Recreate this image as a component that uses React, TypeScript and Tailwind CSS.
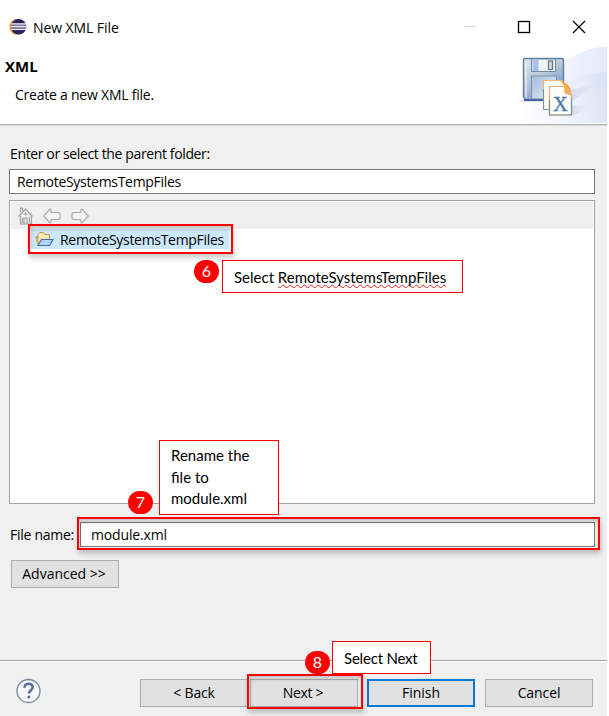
import type { ReactNode } from "react";

function EclipseIcon() {
  return (
    <svg width="18" height="18" viewBox="0 0 18 18">
      <circle cx="8.3" cy="8.8" r="7.9" fill="#f39a32" />
      <circle cx="9.6" cy="8.8" r="7.7" fill="#2c2560" />
      <path d="M2.3 6h14.6M1.8 8.7h15.6M2.3 11.4h14.6" stroke="#f4f3fa" strokeWidth="1.4" />
      <path d="M2 7.3h15M2 10.1h15" stroke="#8e88ad" strokeWidth="1" />
    </svg>
  );
}

function WizardBanner() {
  return (
    <svg width="97" height="76" viewBox="0 2 97 76">
      <defs>
        <linearGradient id="sweep" x1="0" y1="0" x2="1" y2="0">
          <stop offset="0" stopColor="#ffffff" />
          <stop offset="1" stopColor="#e4eaf9" />
        </linearGradient>
        <linearGradient id="sweepLow" x1="0" y1="0.6" x2="1" y2="0.4">
          <stop offset="0" stopColor="#ffffff" stopOpacity="0" />
          <stop offset="1" stopColor="#dbe2f6" />
        </linearGradient>
        <linearGradient id="disk" x1="0" y1="0" x2="0.6" y2="1">
          <stop offset="0" stopColor="#dfe8ee" />
          <stop offset="0.5" stopColor="#b5c7da" />
          <stop offset="1" stopColor="#7292c4" />
        </linearGradient>
        <linearGradient id="label" x1="0" y1="0" x2="1" y2="1">
          <stop offset="0" stopColor="#a4bddf" />
          <stop offset="1" stopColor="#e3ecf8" />
        </linearGradient>
        <linearGradient id="shade" x1="0" y1="0" x2="1" y2="0">
          <stop offset="0" stopColor="#a7a3c4" stopOpacity="0.4" />
          <stop offset="1" stopColor="#cfcfe8" stopOpacity="0" />
        </linearGradient>
      </defs>
      <path d="M8 78C28 34 58 4 97 1V78Z" fill="url(#sweep)" />
      <path d="M15 78C34 47 62 28 97 27V78Z" fill="url(#sweepLow)" />
      <path d="M55 47L89 37Q80 46 61 56Z" fill="url(#shade)" />
      <path d="M61 61L80 60Q75 67 59 71Z" fill="url(#shade)" />
      <path d="M8 57l6-3h20v3Z" fill="#c9bfd6" opacity="0.5" />
      <path d="M14.500 13.500h37.500q1.500 0 1.500 1.500v40h-37l-3-3V14.500q0-1 1-1Z" fill="url(#disk)" stroke="#607e9f" strokeWidth="1.400" />
      <path d="M16 53V16" stroke="#e9f2f4" strokeWidth="1.300" />
      <rect x="21.500" y="14" width="24" height="12.500" fill="#f0f4f8" stroke="#6d88a4" />
      <rect x="22.500" y="14.500" width="6" height="11.500" fill="#a9c0e2" />
      <rect x="38.500" y="16" width="4" height="8.500" fill="#d3dce2" stroke="#667d88" strokeWidth="1.300" />
      <rect x="21.500" y="31" width="25" height="23" fill="url(#label)" stroke="#7892ae" />
      <path d="M14 55h22" stroke="#4465a4" strokeWidth="2" />
      <path d="M33.500 35.500h18l7 7v22h-25Z" fill="#f8faf5" stroke="#efb86d" strokeWidth="1.200" />
      <path d="M33.500 44v20.500h5" fill="none" stroke="#739a93" />
      <path d="M50 36q11 2 11 12Z" fill="#f2a54b" />
      <path d="M39.500 41.500h15l7 8v20.500h-22Z" fill="#fcfcfa" stroke="#e9b473" strokeWidth="1.200" />
      <path d="M39.500 55v15h22V53" fill="none" stroke="#779890" strokeWidth="1.200" />
      <path d="M54 41.500l.5 7 7 2-4-6Z" fill="#f4aa55" />
      <text x="43" y="65.500" fontFamily="Liberation Serif, serif" fontSize="20.500" stroke="#4d7aab" strokeWidth="0.4" fill="#4d7aab">X</text>
    </svg>
  );
}

function HomeIcon() {
  return (
    <svg width="17" height="19" viewBox="0 0 17 19" fill="none" stroke="#a2a2a2" strokeWidth="1.200">
      <path d="M3.500 6V2h2v2.500M1.500 10.500L8.500 3l7 7.500M3.500 10v8h11v-8M7 18v-6h3v6" />
      <path d="M8.500 6.500v3M6.500 8h4M5.500 12v5M12.500 11v6" />
    </svg>
  );
}

function ArrowIcon({ back = false }: { back?: boolean }) {
  return (
    <svg width="18" height="16" viewBox="0 0 18 16" fill="#f4f4f4" stroke="#aaaaaa" strokeWidth="1.200" strokeLinejoin="round" className={back ? "" : "-scale-x-100"}>
      <path d="M.8 8L7 1.200Q8 1 8 2v2.500h7.500l1.500 1v5l-1.500 1H8V14q0 1-1 .8Z" />
    </svg>
  );
}

function FolderIcon() {
  return (
    <svg width="19" height="16" viewBox="0 0 19 16">
      <path d="M3 13V3l1.500-1.500h4L10 3.500h4.500V9" fill="#fae5a6" stroke="#c9974c" />
      <path d="M4 5h10" stroke="#fff6cf" />
      <path d="M.8 6h2M3 14.500L6.500 8.500H18L14.500 14.500Z" fill="#b3d3f3" stroke="#466cb1" strokeWidth="1.200" />
      <path d="M3 13.500L.8 6" stroke="#c9974c" />
    </svg>
  );
}

const ui = "font-['Open_Sans','Noto_Sans',sans-serif] text-black whitespace-nowrap";

function Badge({ n, className }: { n: number; className: string }) {
  return (
    <div className={`absolute flex h-[23px] w-[25px] items-center justify-center rounded-full bg-[#fe0000] pb-px font-['Lato',sans-serif] text-[16px] leading-none text-white ${className}`}>
      {n}
    </div>
  );
}

function Callout({ children, className }: { children: ReactNode; className: string }) {
  return (
    <div className={`absolute border border-[#fa0000] bg-white font-['Lato',sans-serif] text-[15px] whitespace-nowrap text-black ${className}`}>
      {children}
    </div>
  );
}

function Highlight({ className }: { className: string }) {
  return <div className={`absolute border-2 border-[#ff0000] shadow-[1px_4px_5px_rgba(0,0,0,0.2),inset_1px_3px_4px_rgba(0,0,0,0.18)] ${className}`} />;
}

function DialogButton({ children, className }: { children: ReactNode; className: string }) {
  return (
    <button className={`flex h-7 items-center justify-center ${ui} bg-[#e1e1e1] text-[14px] leading-[20px] ${className}`}>
      {children}
    </button>
  );
}

export default function App() {
  return (
    <div className="h-[716px] w-[609px] bg-white">
      <div className={`relative flex h-full w-[607px] flex-col overflow-hidden bg-[#f0f0f0] text-[14px] ${ui}`}>
        <header className="flex h-[126px] shrink-0 flex-col border-b border-b-[#dcdcdc] bg-white">
          <div className="flex h-[47px] shrink-0 items-center pt-[7px] pl-[9px]">
            <EclipseIcon />
            <span className="ml-[6px] tracking-[-0.080px]">New XML File</span>
            <div className="ml-auto flex items-center pr-[20px]">
              <svg width="123" height="14" viewBox="0 0 123 14" fill="none">
                <path d="M0 6.500h12" stroke="#d4d4d4" />
                <rect x="54.500" y="1.500" width="11" height="11" stroke="#000" strokeWidth="1.300" />
                <path d="M109 1l12 12M121 1l-12 12" stroke="#000" strokeWidth="1.300" />
              </svg>
            </div>
          </div>
          <div className="flex h-[78px] border-b border-b-[#b0b0b0]">
            <div className="pt-[9px] pl-[5px]">
              <h1 className="text-[15px] leading-[20px] font-bold">XML</h1>
              <p className="mt-[9px] ml-[10px] leading-[20px] tracking-[-0.230px]">Create a new XML file.</p>
            </div>
            <div className="ml-auto"><WizardBanner /></div>
          </div>
        </header>

        <main className="flex h-[534px] flex-col pt-[18px] pr-[12px] pl-[9px]">
          <label className="ml-px h-[25px] leading-[20px] tracking-[-0.370px]">Enter or select the parent folder:</label>
          <div className="h-[25px] border border-[#777777] bg-white pl-[7px] leading-[23px] tracking-[-0.300px]">RemoteSystemsTempFiles</div>
          <div className="mt-[6px] h-[304px] border border-[#a0a0a8] bg-white p-px">
            <div className="flex h-[27px] items-center gap-[9px] bg-[#efefef] pl-[6px]">
              <HomeIcon />
              <div className="flex gap-[10px]">
                <ArrowIcon back />
                <ArrowIcon />
              </div>
            </div>
            <div className="ml-[20px] flex h-[20px] w-[198px] items-center bg-[#cce8ff] pl-[4px]">
              <FolderIcon />
              <span className="ml-[6px] tracking-[-0.300px]">RemoteSystemsTempFiles</span>
            </div>
          </div>
          <div className="mt-[18px] flex h-[25px] items-center">
            <label className="ml-px w-[70px] tracking-[-0.280px]">File name:</label>
            <div className="h-[25px] flex-1 border border-[#777777] bg-white pl-[10px] leading-[23px] tracking-[-0.150px]">module.xml</div>
          </div>
          <DialogButton className="mt-[13px] ml-[2px] w-[108px] border border-[#adadad] pr-[2px]">Advanced &gt;&gt;</DialogButton>
        </main>

        <footer className="flex h-[56px] items-center border-t border-t-[#a0a0a0] pt-[8px] pr-[14px] pl-[16px] shadow-[inset_0_1px_0_#fff]">
          <svg width="26" height="26" viewBox="0 0 26 26" className="mb-[3px]">
            <circle cx="12.500" cy="13" r="11.500" fill="#f7f8fa" stroke="#7184a0" strokeWidth="1.300" />
            <path d="M8.500 9.800C8.500 4.600 16.700 4.700 16.700 9.200c0 3-3.700 3-3.700 6.200" fill="none" stroke="#536b8d" strokeWidth="2.500" />
            <circle cx="12.900" cy="19" r="1.500" fill="#536b8d" />
          </svg>
          <DialogButton className="ml-auto w-[108px] border border-[#adadad] tracking-[-0.150px]">&lt; Back</DialogButton>
          <DialogButton className="ml-[2px] w-[108px] border border-[#adadad] pr-[2px] tracking-[-0.350px]">Next &gt;</DialogButton>
          <DialogButton className="ml-[9px] w-[108px] border-2 border-[#0078d7]">Finish</DialogButton>
          <DialogButton className="ml-[10px] w-[108px] border border-[#adadad] tracking-[-0.100px]">Cancel</DialogButton>
        </footer>

        <Highlight className="top-[224px] left-[28px] h-[30px] w-[205px]" />
        <Highlight className="top-[517px] left-[77px] h-[33px] w-[523px]" />
        <Highlight className="top-[674px] left-[247px] h-[35px] w-[116px]" />

        <Badge n={6} className="top-[260px] left-[194px]" />
        <Badge n={7} className="top-[491px] left-[128px]" />
        <Badge n={8} className="top-[651px] left-[305px]" />

        <Callout className="top-[260px] left-[222px] h-[33px] w-[241px] pt-[6px] pl-[11px] leading-[20px]">
          Select <span className="underline decoration-[#e02020] decoration-wavy decoration-[1px] underline-offset-[1px] [text-decoration-skip-ink:none]">RemoteSystemsTempFiles</span>
        </Callout>
        <Callout className="top-[440px] left-[159px] h-[75px] w-[120px] pt-[4px] pl-[11px] leading-[21.500px]">
          Rename the<br />file to<br />module.xml
        </Callout>
        <Callout className="top-[641px] left-[332px] h-[33px] w-[99px] pt-[6px] pl-[11px] leading-[20px] tracking-[-0.200px]">Select Next</Callout>
      </div>
    </div>
  );
}
